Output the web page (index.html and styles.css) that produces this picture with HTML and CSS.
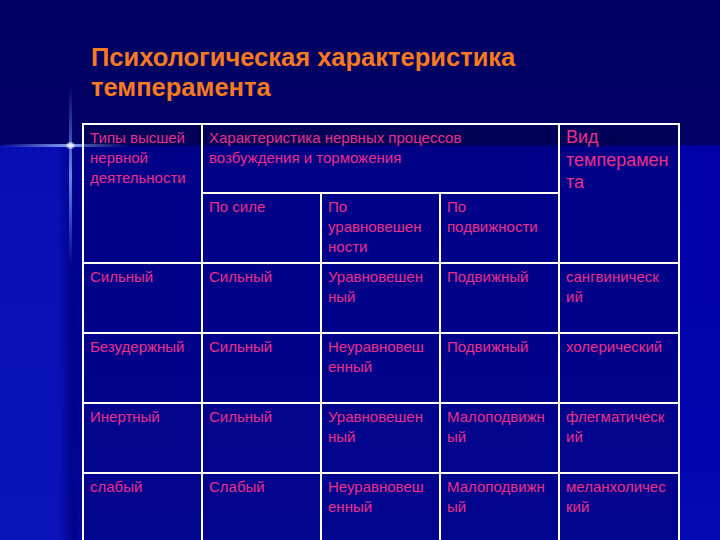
FILE: index.html
```html
<!DOCTYPE html>
<html lang="ru">
<head>
<meta charset="utf-8">
<title>Психологическая характеристика темперамента</title>
<link rel="stylesheet" href="styles.css">
</head>
<body>
<div class="slide">
  <div class="bg-left"></div>
  <div class="cross-v"></div>
  <div class="cross-h"></div>
  <div class="cross-dot"></div>
  <h1 class="title">Психологическая характеристика<br>темперамента</h1>
  <table class="grid">
    <colgroup>
      <col class="c1"><col class="c2"><col class="c3"><col class="c4"><col class="c5">
    </colgroup>
    <tr class="h1">
      <td rowspan="2">Типы высшей<br>нервной<br>деятельности</td>
      <td colspan="3">Характеристика нервных процессов<br>возбуждения и торможения</td>
      <td rowspan="2" class="big">Вид<br>темперамен<br>та</td>
    </tr>
    <tr class="h2">
      <td>По силе</td>
      <td>По<br>уравновешен<br>ности</td>
      <td>По<br>подвижности</td>
    </tr>
    <tr class="row">
      <td>Сильный</td><td>Сильный</td><td>Уравновешен<br>ный</td><td>Подвижный</td><td>сангвиническ<br>ий</td>
    </tr>
    <tr class="row">
      <td>Безудержный</td><td>Сильный</td><td>Неуравновеш<br>енный</td><td>Подвижный</td><td>холерический</td>
    </tr>
    <tr class="row">
      <td>Инертный</td><td>Сильный</td><td>Уравновешен<br>ный</td><td>Малоподвижн<br>ый</td><td>флегматическ<br>ий</td>
    </tr>
    <tr class="row">
      <td>слабый</td><td>Слабый</td><td>Неуравновеш<br>енный</td><td>Малоподвижн<br>ый</td><td>меланхоличес<br>кий</td>
    </tr>
  </table>
</div>
</body>
</html>
```

FILE: styles.css
```css
html, body {
  margin: 0;
  padding: 0;
  overflow: hidden;
}
body {
  width: 720px;
  height: 540px;
  font-family: "Liberation Sans", Arial, sans-serif;
}
.slide {
  position: relative;
  width: 720px;
  height: 540px;
  overflow: hidden;
  background:
    linear-gradient(to bottom, #000062 0, #000066 145px, #0000a8 146px, #0408b2 540px);
  padding-top: 42px;
  box-sizing: border-box;
}
.bg-left {
  position: absolute;
  left: 0;
  top: 146px;
  width: 84px;
  height: 400px;
  background: linear-gradient(to right, rgba(20,40,200,0.35) 0, rgba(20,40,200,0.35) 58px, rgba(0,0,110,0.6) 74px, rgba(0,0,130,0.2) 84px);
}
.cross-v {
  position: absolute;
  left: 69px;
  top: 85px;
  width: 3px;
  height: 180px;
  background: linear-gradient(to bottom, rgba(80,120,255,0) 0, rgba(110,150,255,0.9) 50%, rgba(80,120,255,0) 100%);
}
.cross-h {
  position: absolute;
  left: 0;
  top: 144px;
  width: 130px;
  height: 3px;
  background: linear-gradient(to right, rgba(80,120,255,0) 0, rgba(140,170,255,0.95) 54%, rgba(80,120,255,0) 100%);
}
.cross-dot {
  position: absolute;
  left: 66px;
  top: 142px;
  width: 9px;
  height: 7px;
  border-radius: 50%;
  background: radial-gradient(circle, #ffffff 0, rgba(255,255,255,0.6) 45%, rgba(255,255,255,0) 100%);
}
.title {
  position: relative;
  margin: 0 0 21px 91px;
  font-size: 25.5px;
  line-height: 30px;
  font-weight: bold;
  color: #f87a1e;
}
.grid {
  position: relative;
  margin-left: 82px;
  border-collapse: collapse;
  table-layout: fixed;
  width: 598px;
  border: 2px solid #ffffff;
}
.c1, .c2, .c3, .c4 { width: 119px; }
.c5 { width: 120px; }
.grid td {
  border: 2px solid #ffffff;
  vertical-align: top;
  padding: 3px 6px;
  font-size: 15px;
  line-height: 20px;
  color: #e8308a;
  white-space: nowrap;
  overflow: hidden;
  background: rgba(0, 0, 60, 0.3);
}
.grid td.big {
  font-size: 18px;
  line-height: 22.5px;
  padding-top: 1px;
}
.h1 td { height: 61px; }
.h2 td { height: 62px; }
.row td { height: 62px; }
```
